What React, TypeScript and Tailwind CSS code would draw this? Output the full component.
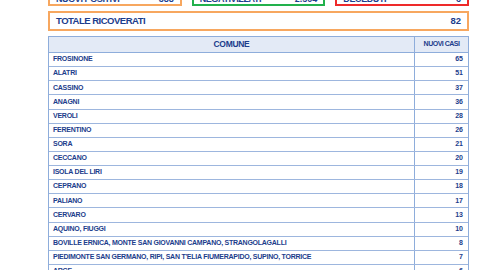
const rows: [string, number][] = [
  ['FROSINONE', 65],
  ['ALATRI', 51],
  ['CASSINO', 37],
  ['ANAGNI', 36],
  ['VEROLI', 28],
  ['FERENTINO', 26],
  ['SORA', 21],
  ['CECCANO', 20],
  ['ISOLA DEL LIRI', 19],
  ['CEPRANO', 18],
  ['PALIANO', 17],
  ['CERVARO', 13],
  ['AQUINO, FIUGGI', 10],
  ['BOVILLE ERNICA, MONTE SAN GIOVANNI CAMPANO, STRANGOLAGALLI', 8],
  ['PIEDIMONTE SAN GERMANO, RIPI, SAN T\'ELIA FIUMERAPIDO, SUPINO, TORRICE', 7],
  ['ARCE', 6]
];

function StatBox({ label, value, border }: { label: string; value: string; border: string }) {
  return (
    <div className={`flex h-[18px] items-center justify-between border-2 bg-white px-[6px] pt-[5px] ${border}`}>
      <span className="text-[9px] tracking-[-0.4px]">{label}</span>
      <span className="text-[9px]">{value}</span>
    </div>
  );
}

export default function App() {
  return (
    <div className="h-[270px] w-[480px] overflow-hidden bg-white font-['Liberation_Sans',Arial,sans-serif] font-bold text-[#1c3d8c]">
      <div className="ml-[48px] w-[421px]">
        {/* riepilogo in alto */}
        <div className="-mt-[12px] grid grid-cols-3 gap-[10px]">
          <StatBox label="NUOVI POSITIVI" value="388" border="border-[#f7a75f]" />
          <StatBox label="NEGATIVIZZATI" value="2.504" border="border-[#22b14c]" />
          <StatBox label="DECEDUTI" value="6" border="border-[#ee2a2a]" />
        </div>
        <div className="mt-[5px] flex h-[20px] items-center justify-between border-2 border-[#f7a75f] px-[6px]">
          <span className="text-[9.5px] tracking-[-0.5px]">TOTALE RICOVERATI</span>
          <span className="text-[9.5px]">82</span>
        </div>

        {/* tabella comuni */}
        <div className="mt-[5px] border border-[#8eaddb]">
          <div className="grid h-[16px] grid-cols-[1fr_54px] border-b border-[#8eaddb] bg-[#e3eaf6]">
            <div className="flex items-center justify-center text-[8.5px] tracking-[-0.3px]">COMUNE</div>
            <div className="flex items-center justify-center border-l border-[#8eaddb] text-[7px] tracking-[-0.5px]">NUOVI CASI</div>
          </div>
          {rows.map(([name, n]) => (
            <div key={name} className="grid h-[14.13px] grid-cols-[1fr_54px] border-b border-[#9db6de]">
              <div className="flex items-center pl-[4px] text-[7px] tracking-[-0.25px] whitespace-nowrap">{name}</div>
              <div className="flex items-center justify-end border-l border-[#8eaddb] pr-[5px] text-[7px]">{n}</div>
            </div>
          ))}
        </div>
      </div>
    </div>
  );
}
